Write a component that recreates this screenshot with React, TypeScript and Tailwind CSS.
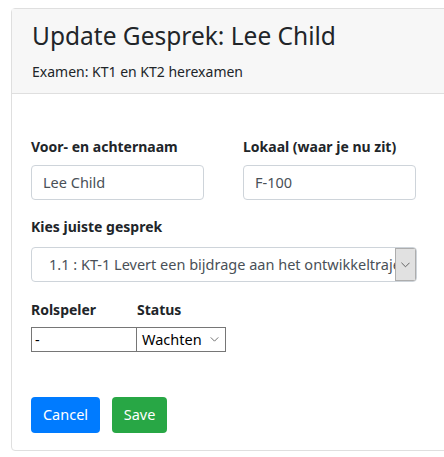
const Chevron = ({ className = '' }: { className?: string }) => (
  <svg viewBox="0 0 10 6" className={className} fill="none" stroke="currentColor" strokeWidth="1">
    <polyline points="0.5,0.5 5,5 9.5,0.5" />
  </svg>
);

const App = () => {
  return (
    <div className="h-[457px] w-[444px] overflow-hidden bg-white pl-[11px] pt-[8px] text-[#212529] font-['Noto_Sans',sans-serif]">
      <div className="w-[450px] rounded-[4px] border border-[#dfdfdf]">
        {/* Header */}
        <div className="h-[85px] border-b border-[#dfdfdf] bg-[#f7f7f7] pl-[20px] pt-[10px]">
          <h3 className="text-[24.5px] leading-[34px]">Update Gesprek: Lee Child</h3>
          <p className="mt-[7px] text-[14px] leading-[24px]">Examen: KT1 en KT2 herexamen</p>
        </div>

        {/* Body */}
        <div className="pl-[19px] pt-[41px] pb-[17px]">
          <div className="flex gap-[39px]">
            <div className="w-[173px]">
              <label className="block text-[14px] font-bold leading-[24px]">Voor- en achternaam</label>
              <div className="mt-[6px] flex h-[35px] items-center rounded-[4px] border border-[#ced4da] px-[11px] text-[14.5px] text-[#495057]">
                Lee Child
              </div>
            </div>
            <div className="w-[173px]">
              <label className="block text-[14px] font-bold leading-[24px]">Lokaal (waar je nu zit)</label>
              <div className="mt-[6px] flex h-[35px] items-center rounded-[4px] border border-[#ced4da] px-[11px] text-[14.5px] text-[#495057]">
                F-100
              </div>
            </div>
          </div>

          <label className="mt-[15px] block text-[14px] font-bold leading-[24px]">Kies juiste gesprek</label>
          <div className="mt-[8px] flex h-[35px] w-[386px] items-stretch overflow-hidden rounded-[4px] border border-[#ced4da] text-[14.5px] text-[#495057]">
            <div className="flex flex-1 items-center overflow-hidden whitespace-nowrap pl-[17px]">
              1.1 : KT-1 Levert een bijdrage aan het ontwikkeltraject
            </div>
            <div className="flex w-[21px] items-center justify-center border border-[#adadad] bg-[#e1e1e1] text-[#555]">
              <Chevron className="w-[9px] h-[6px]" />
            </div>
          </div>

          <div className="mt-[16px] flex">
            <div className="w-[106px]">
              <label className="block text-[14px] font-bold leading-[24px]">Rolspeler</label>
              <div className="mt-[5px] flex h-[25px] items-center border border-[#767676] px-[3px] text-[14.5px] text-black">
                -
              </div>
            </div>
            <div className="w-[89px]">
              <label className="block text-[14px] font-bold leading-[24px]">Status</label>
              <div className="mt-[5px] -ml-px flex h-[25px] items-center justify-between border border-[#767676] pl-[5px] pr-[6px] text-[14.5px] text-black">
                Wachten
                <Chevron className="w-[9px] h-[5px] text-[#555]" />
              </div>
            </div>
          </div>

          <div className="mt-[45px] flex gap-[12px]">
            <button className="h-[36px] w-[69px] rounded-[4px] bg-[#007bff] text-[14.5px] text-white">Cancel</button>
            <button className="h-[36px] w-[55px] rounded-[4px] bg-[#28a745] text-[14.5px] text-white">Save</button>
          </div>
        </div>
      </div>
    </div>
  );
};

export default App;
